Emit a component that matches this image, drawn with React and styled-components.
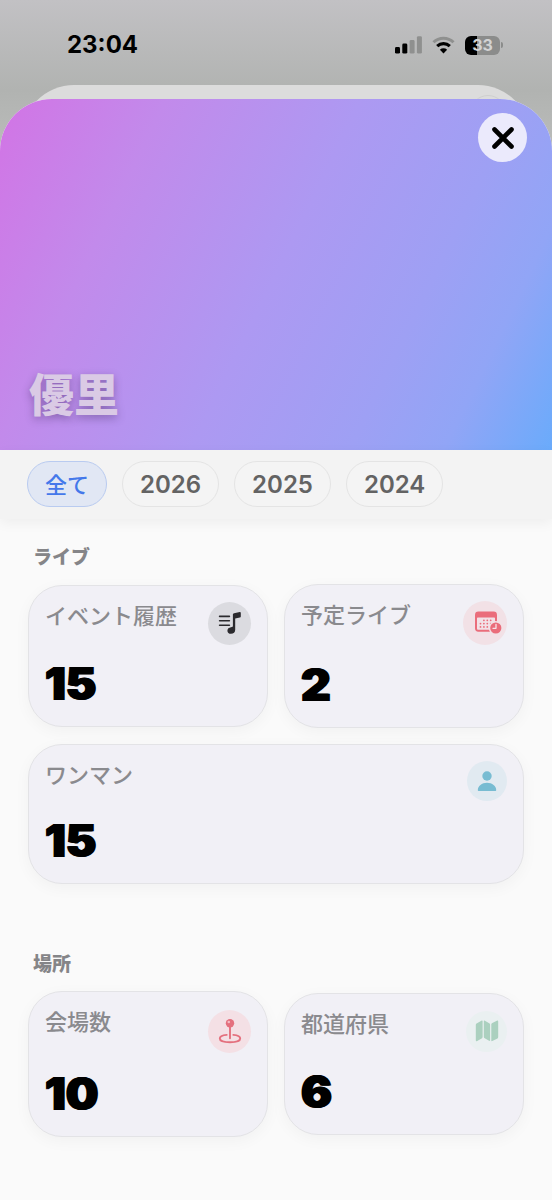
import React, { useState } from "react";
import styled, { createGlobalStyle } from "styled-components";

const latin = `Inter, "Noto Sans CJK JP", sans-serif`;

const GlobalStyle = createGlobalStyle`
  * { box-sizing: border-box; }
  body {
    margin: 0;
    background: #fafafa;
    font-family: ${latin};
    -webkit-font-smoothing: antialiased;
  }
  h1, h2, h3, p { margin: 0; }
`;

const Screen = styled.div`
  min-height: 100vh;
  display: flex;
  flex-direction: column;
  background: linear-gradient(#c2c1c4, #b1b3b1 90px, #bcbebc 160px, #fafafa 161px);
`;

const StatusBar = styled.header`
  height: 85px;
  padding: 5px 49px 0 67px;
  display: flex;
  align-items: center;
  justify-content: space-between;
`;

const Clock = styled.time`
  font-size: 24px;
  line-height: 32px;
  font-weight: 700;
  color: #000;
`;

const StatusIcons = styled.div`
  display: flex;
  align-items: center;
  gap: 10px;
`;

const Battery = styled.div`
  display: flex;
  align-items: center;
  gap: 1px;
`;

const BatteryBody = styled.div`
  width: 35px;
  height: 19px;
  border-radius: 6px;
  background: linear-gradient(90deg, #000 35%, #8b8c8b 35%);
  color: #d3d3d3;
  font-size: 16px;
  line-height: 19px;
  font-weight: 700;
  text-align: center;
`;

const BatteryNub = styled.div`
  width: 2px;
  height: 6px;
  border-radius: 0 2px 2px 0;
  background: #8b8c8b;
`;

const BackSheet = styled.div`
  height: 60px;
  margin: 0 22px -46px;
  padding: 10px 24px 0;
  border-radius: 52px 52px 0 0;
  background: #dcdcdc;
  display: flex;
  justify-content: flex-end;
`;

const BackSheetButton = styled.div`
  width: 36px;
  height: 36px;
  border: 1px solid #cfcfcf;
  border-radius: 50%;
`;

const Sheet = styled.main`
  position: relative;
  flex: 1;
  border-radius: 52px 52px 0 0;
  overflow: hidden;
  background: #fafafa;
`;

const Hero = styled.section`
  height: 351px;
  padding: 14px 25px 22px 29px;
  display: flex;
  flex-direction: column;
  justify-content: space-between;
  background: linear-gradient(116deg, #d274e5 0%, #c28aeb 23%, #ad99f2 50%, #9ea0f4 72%, #91a5f6 85%, #6aabfb 100%);
`;

const CloseButton = styled.button`
  align-self: flex-end;
  width: 49px;
  height: 49px;
  padding: 0;
  border: 0;
  border-radius: 50%;
  background: #ebeafc;
  display: grid;
  place-items: center;
`;

const ArtistName = styled.h1`
  font-size: 45px;
  line-height: 64px;
  font-weight: 900;
  color: #dacae5;
  text-shadow: 0 3px 8px rgba(60, 40, 90, 0.4);
`;

const FilterBar = styled.nav`
  display: flex;
  gap: 15px;
  padding: 11px 27px 12px;
  background: #f3f3f3;
  box-shadow: 0 4px 12px rgba(0, 0, 0, 0.05);
`;

const Chip = styled.button`
  height: 46px;
  padding: 1px 17px 0;
  border: 1px solid ${(p) => (p.$active ? "#b9cbf0" : "#e4e4e4")};
  border-radius: 23px;
  background: ${(p) => (p.$active ? "#e1e7f4" : "#f4f4f4")};
  color: ${(p) => (p.$active ? "#4478ea" : "#636363")};
  font-family: ${latin};
  font-size: ${(p) => (p.$active ? 22 : 24)}px;
  font-weight: ${(p) => (p.$active ? 500 : 600)};
  line-height: 32px;
`;

const Content = styled.div`
  padding: 27px 28px 63px;
  display: flex;
  flex-direction: column;
  gap: 69px;
`;

const Section = styled.section`
  display: flex;
  flex-direction: column;
  gap: 14px;
`;

const SectionTitle = styled.h2`
  padding-left: 5px;
  font-size: 19px;
  line-height: 24px;
  font-weight: 800;
  color: #858588;
`;

const CardGrid = styled.div`
  display: grid;
  grid-template-columns: 1fr 1fr;
  align-items: center;
  gap: 16px;
`;

const Card = styled.article`
  grid-column: ${(p) => (p.$wide ? "1 / -1" : "auto")};
  padding: 16px 16px 19px;
  border: 1px solid #e3e3e6;
  border-radius: 34px;
  background: #f1f0f6;
  box-shadow: 0 4px 16px rgba(0, 0, 0, 0.04);
  display: flex;
  flex-direction: column;
  gap: 15px;
`;

const CardHead = styled.div`
  height: ${(p) => p.$height}px;
  display: flex;
  justify-content: space-between;
`;

const CardLabel = styled.h3`
  font-size: 22px;
  line-height: 29px;
  font-weight: 500;
  color: #8a8a8e;
`;

const Badge = styled.div`
  align-self: center;
  flex: none;
  width: ${(p) => p.$size}px;
  height: ${(p) => p.$size}px;
  border-radius: 50%;
  background: ${(p) => p.$tint};
  color: ${(p) => p.$color};
  display: grid;
  place-items: center;
`;

const CardValue = styled.p`
  font-size: 46px;
  line-height: 48px;
  font-weight: 900;
  color: #000;
  text-shadow: 1px 0 #000, -1px 0 #000;
`;

const SignalIcon = () => (
  <svg width="27" height="18" viewBox="0 0 27 18" aria-hidden="true">
    <rect x="0" y="11" width="5" height="6.6" rx="1.4" fill="#000" />
    <rect x="7.3" y="7.6" width="5" height="10" rx="1.4" fill="#000" />
    <rect x="14.6" y="4" width="5" height="13.6" rx="1.4" fill="#8f908f" />
    <rect x="21.9" y="0.2" width="5" height="17.4" rx="1.4" fill="#8f908f" />
  </svg>
);

const WifiIcon = () => (
  <svg width="23" height="18" viewBox="0 0 23 18" fill="none" aria-hidden="true">
    <path d="M1.5 6.3a14.3 14.3 0 0 1 20 0" stroke="#8f908f" strokeWidth="3" />
    <path d="M5.2 10.1a9.2 9.2 0 0 1 12.6 0" stroke="#000" strokeWidth="3.1" />
    <path d="M11.5 17.4l-3.6-3.7a5.2 5.2 0 0 1 7.2 0z" fill="#000" />
  </svg>
);

const CloseIcon = () => (
  <svg width="22" height="22" viewBox="0 0 22 22" aria-hidden="true">
    <path d="M2.5 2.5l17 17M19.5 2.5l-17 17" stroke="#000" strokeWidth="4.6" strokeLinecap="round" />
  </svg>
);

const MusicListIcon = () => (
  <svg width="24" height="24" viewBox="0 0 24 24" aria-hidden="true">
    <path d="M1.6 5.400h9.800M1.600 9.800h9.800M1.600 14.200h9.800" stroke="currentColor" strokeWidth="1.6" strokeLinecap="round" />
    <path
      d="M14.900 3.600c0-.8.4-1.2 1.2-1.4l5.700-1.100c.6-.1 1 .2 1 .8v3.600c0 .6-.3.9-.9 1.100l-4.700 1V18.800c0 2.400-1.600 4-4.200 4-2.200 0-3.600-1.200-3.600-3.100 0-2 1.400-3.200 3.600-3.500l.9-.2c.7-.1 1-.5 1-1.100z"
      fill="currentColor"
    />
  </svg>
);

const CalendarClockIcon = () => (
  <svg width="33" height="24" viewBox="-5 0 33 24" aria-hidden="true">
    <path
      fillRule="evenodd"
      fill="currentColor"
      d="M4.400.600h15.200A3.400 3.400 0 0 1 23 4v13.300a3.400 3.400 0 0 1-3.400 3.400H4.400A3.400 3.400 0 0 1 1 17.300V4A3.400 3.400 0 0 1 4.400.600zM3.800 6.400a.8.8 0 0 0-.8.8v10.200c0 .8.500 1.300 1.300 1.300h15.400c.8 0 1.300-.5 1.300-1.300V7.200a.8.8 0 0 0-.8-.8z"
    />
    <path
      d="M9.900 9.300h0M13.300 9.300h0M16.700 9.300h0M6.500 12.600h0M9.900 12.600h0M13.300 12.600h0M16.700 12.600h0M6.500 15.900h0M9.900 15.900h0M13.300 15.900h0"
      stroke="currentColor"
      strokeWidth="1.800"
      strokeLinecap="round"
    />
    <circle cx="21.800" cy="17" r="7" fill="#f2e1e6" />
    <circle cx="21.800" cy="17" r="5.600" fill="currentColor" />
    <path d="M22 13.500v3.800h-3" stroke="#f7e3e8" strokeWidth="1.300" fill="none" strokeLinecap="round" strokeLinejoin="round" />
  </svg>
);

const PersonIcon = () => (
  <svg width="20" height="22" viewBox="0 0 20 22" aria-hidden="true">
    <circle cx="10" cy="6" r="4.700" fill="currentColor" />
    <path d="M1.800 21C1.200 21 .8 20.600.8 20c0-3.800 4-7.200 9.200-7.200s9.200 3.400 9.200 7.200c0 .6-.4 1-1 1z" fill="currentColor" />
  </svg>
);

const PinIcon = () => (
  <svg width="24" height="26" viewBox="0 0 24 26" aria-hidden="true">
    <path
      d="M8.700 16.900C4.600 17.200 1.800 18.700 1.800 20.600c0 2.200 4.400 3.700 10.200 3.700s10.200-1.500 10.200-3.700c0-1.900-2.800-3.400-6.900-3.700"
      fill="none"
      stroke="currentColor"
      strokeWidth="1.900"
      strokeLinecap="round"
    />
    <path d="M12 8v12.300" stroke="currentColor" strokeWidth="1.900" strokeLinecap="round" />
    <circle cx="12" cy="5.300" r="4.200" fill="currentColor" />
    <circle cx="10.800" cy="4" r="1.300" fill="#f3bcc4" />
  </svg>
);

const MapIcon = () => (
  <svg width="24" height="22" viewBox="0 0 24 22" fill="currentColor" aria-hidden="true">
    <path d="M.8 5.200c0-1 .4-1.600 1.200-2L6.800.6C7.300.4 7.600.7 7.600 1.200v15.600c0 .9-.3 1.300-1 1.700l-4.400 2.600c-.8.4-1.400.1-1.400-.8z" />
    <path d="M8.800 1.300c0-.7.5-.9 1.100-.6l4.300 2.500c.6.3.9.7.9 1.400v15.600c0 .7-.4.9-1 .6l-4.400-2.500c-.6-.3-.9-.8-.9-1.500z" />
    <path d="M16.300 4.600c0-.8.300-1.200 1-1.600L21.800.7c.8-.4 1.400-.1 1.400.8v15.200c0 1-.4 1.600-1.200 2l-4.700 2.400c-.6.3-1 .1-1-.6z" />
  </svg>
);

const filters = ["全て", "2026", "2025", "2024"];

const sections = [
  {
    title: "ライブ",
    cards: [
      { label: "イベント履歴", value: 15, slot: 42, size: 43, tint: "#dbdbe0", color: "#2b2a2e", Icon: MusicListIcon },
      { label: "予定ライブ", value: 2, slot: 44, size: 44, tint: "#f2e1e6", color: "#ea6d7b", Icon: CalendarClockIcon },
      { label: "ワンマン", value: 15, slot: 40, size: 40, tint: "#e1eaf1", color: "#78bcd2", Icon: PersonIcon, wide: true },
    ],
  },
  {
    title: "場所",
    cards: [
      { label: "会場数", value: 10, slot: 46, size: 43, tint: "#f4e0e5", color: "#e4707e", Icon: PinIcon },
      { label: "都道府県", value: 6, slot: 42, size: 41, tint: "#eaf0f1", color: "#abd0bf", Icon: MapIcon },
    ],
  },
];

function StatCard({ label, value, slot, size, tint, color, Icon, wide }) {
  return (
    <Card $wide={wide}>
      <CardHead $height={slot}>
        <CardLabel>{label}</CardLabel>
        <Badge $size={size} $tint={tint} $color={color}>
          <Icon />
        </Badge>
      </CardHead>
      <CardValue>{value}</CardValue>
    </Card>
  );
}

export default function App() {
  const [active, setActive] = useState(filters[0]);
  return (
    <Screen lang="ja">
      <GlobalStyle />
      <StatusBar>
        <Clock>23:04</Clock>
        <StatusIcons>
          <SignalIcon />
          <WifiIcon />
          <Battery>
            <BatteryBody>33</BatteryBody>
            <BatteryNub />
          </Battery>
        </StatusIcons>
      </StatusBar>
      <BackSheet>
        <BackSheetButton />
      </BackSheet>
      <Sheet>
        <Hero>
          <CloseButton type="button" aria-label="閉じる">
            <CloseIcon />
          </CloseButton>
          <ArtistName>優里</ArtistName>
        </Hero>
        <FilterBar>
          {filters.map((name) => (
            <Chip
              key={name}
              type="button"
              $active={name === active}
              aria-pressed={name === active}
              onClick={() => setActive(name)}
            >
              {name}
            </Chip>
          ))}
        </FilterBar>
        <Content>
          {sections.map(({ title, cards }) => (
            <Section key={title}>
              <SectionTitle>{title}</SectionTitle>
              <CardGrid>
                {cards.map((card) => (
                  <StatCard key={card.label} {...card} />
                ))}
              </CardGrid>
            </Section>
          ))}
        </Content>
      </Sheet>
    </Screen>
  );
}
